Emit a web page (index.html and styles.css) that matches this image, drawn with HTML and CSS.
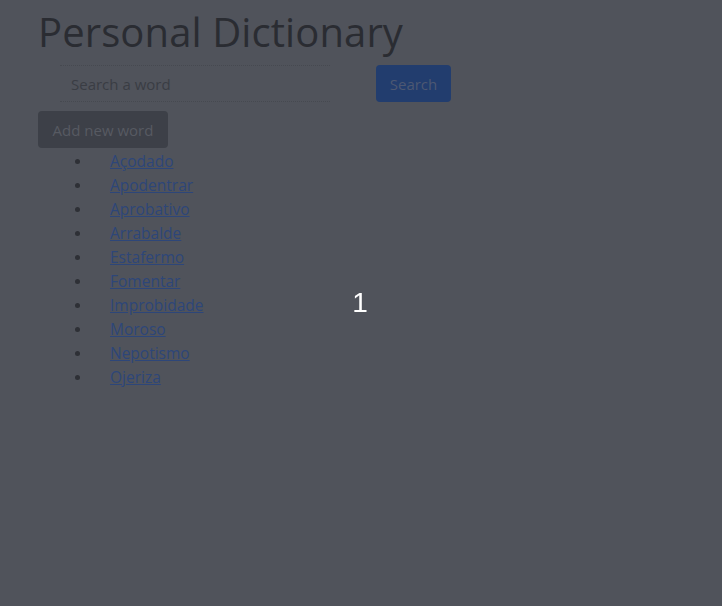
FILE: index.html
```html
<!DOCTYPE html>
<html>
<head>
<meta charset="utf-8">
<link rel="stylesheet" href="styles.css">
</head>
<body>
<div class="page">
  <h1 class="title">Personal Dictionary</h1>
  <form class="search">
    <input class="search-input" type="text" placeholder="Search a word">
    <button class="btn btn-search" type="button">Search</button>
  </form>
  <button class="btn btn-add" type="button">Add new word</button>
  <ul class="words">
    <li><a href="#">Açodado</a></li>
    <li><a href="#">Apodentrar</a></li>
    <li><a href="#">Aprobativo</a></li>
    <li><a href="#">Arrabalde</a></li>
    <li><a href="#">Estafermo</a></li>
    <li><a href="#">Fomentar</a></li>
    <li><a href="#">Improbidade</a></li>
    <li><a href="#">Moroso</a></li>
    <li><a href="#">Nepotismo</a></li>
    <li><a href="#">Ojeriza</a></li>
  </ul>
</div>
<div class="overlay"><span class="counter">1</span></div>
</body>
</html>
```
FILE: styles.css
```css
html, body {
  margin: 0;
  padding: 0;
  height: 100%;
}
body {
  background: #50535b;
  font-family: "Open Sans", "Noto Sans", sans-serif;
  color: #2a2c32;
}
.page {
  padding: 7px 0 0 38px;
}
.title {
  margin: 0;
  font-size: 40px;
  font-weight: 400;
  line-height: 50px;
  color: #2a2c32;
  letter-spacing: 0.1px;
}
.search {
  display: flex;
  align-items: center;
  margin-top: 8px;
  margin-left: 22px;
}
.search-input {
  width: 270px;
  height: 37px;
  box-sizing: border-box;
  border: none;
  border-top: 1px dotted #464950;
  border-bottom: 1px dotted #464950;
  background: transparent;
  padding: 0 11px;
  font-family: inherit;
  font-size: 15px;
  color: #3a3d44;
  outline: none;
}
.search-input::placeholder {
  color: #3a3d44;
}
.btn {
  font-family: inherit;
  font-size: 15px;
  border: none;
  border-radius: 4px;
  height: 37px;
  padding: 0 12px;
  cursor: pointer;
}
.btn-search {
  margin-left: 46px;
  background: #223d6e;
  color: #4d5872;
  width: 75px;
  padding: 0;
}
.btn-add {
  display: block;
  margin-top: 9px;
  background: #3d4048;
  color: #575a62;
  width: 130px;
  padding: 0;
}
.words {
  margin: 0;
  padding: 1px 0 0 72px;
  list-style: none;
  font-size: 15.5px;
  line-height: 24px;
}
.words li {
  position: relative;
}
.words li::before {
  content: "";
  position: absolute;
  left: -35px;
  top: 10px;
  width: 5px;
  height: 5px;
  border-radius: 50%;
  background: #2e3036;
}
.words a {
  color: #2d4679;
  text-decoration: underline;
}
.overlay {
  position: fixed;
  inset: 0;
  display: flex;
  align-items: center;
  justify-content: center;
  pointer-events: none;
}
.counter {
  font-family: "Liberation Sans", Arial, sans-serif;
  font-size: 28px;
  color: #ffffff;
  transform: translate(-1px, 0);
}
```
